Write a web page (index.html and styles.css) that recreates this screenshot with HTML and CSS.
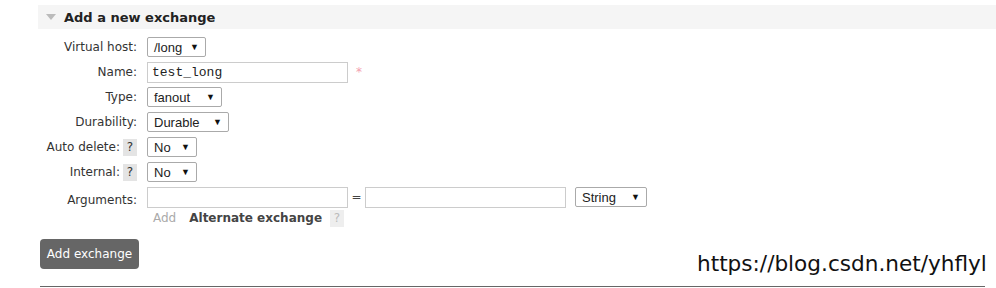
FILE: index.html
```html
<!DOCTYPE html>
<html lang="en">
<head>
  <meta charset="UTF-8" />
  <title>Add a new exchange</title>
  <link rel="stylesheet" href="styles.css">
</head>
<body>

<div class="section">
  <h2 class="section-title"><span class="arrow"></span>Add a new exchange</h2>

  <div class="form">
    <label>Virtual host:</label>
    <div class="field"><div class="select w-vhost">/long<span class="caret">&#9660;</span></div></div>

    <label>Name:</label>
    <div class="field"><div class="input mono">test_long</div><span class="mand">*</span></div>

    <label>Type:</label>
    <div class="field"><div class="select w-type">fanout<span class="caret">&#9660;</span></div></div>

    <label>Durability:</label>
    <div class="field"><div class="select w-dur">Durable<span class="caret">&#9660;</span></div></div>

    <label>Auto delete: <span class="help">?</span></label>
    <div class="field"><div class="select w-no">No<span class="caret">&#9660;</span></div></div>

    <label>Internal: <span class="help">?</span></label>
    <div class="field"><div class="select w-no">No<span class="caret">&#9660;</span></div></div>

    <label class="lbl-args">Arguments:</label>
    <div class="field args">
      <div class="input"></div>
      <span class="eq">=</span>
      <div class="input"></div>
      <div class="select w-str">String<span class="caret">&#9660;</span></div>
    </div>

    <span></span>
    <div class="field extra">
      <span class="add-link">Add</span>
      <span class="alt">Alternate exchange</span>
      <span class="help faint">?</span>
    </div>
  </div>

  <button class="btn">Add exchange</button>
  <div class="rule"></div>
</div>

<div class="watermark">https://blog.csdn.net/yhflyl</div>

</body>
</html>
```

FILE: styles.css
```css
* {
  box-sizing: border-box;
}

body {
  margin: 0;
  font-family: Tahoma, "DejaVu Sans", Verdana, sans-serif;
  font-size: 12px;
  color: #333;
  background: #fff;
}

.section {
  padding: 5px 0 0 38px;
}

.section-title {
  margin: 0;
  height: 24px;
  display: flex;
  align-items: center;
  background: #f5f5f5;
  font-size: 13px;
  font-weight: bold;
  color: #222;
  padding-left: 8px;
}

.arrow {
  width: 0;
  height: 0;
  border-left: 5px solid transparent;
  border-right: 5px solid transparent;
  border-top: 6px solid #bbb;
  margin-right: 8px;
}

.form {
  display: grid;
  grid-template-columns: 99px auto;
  column-gap: 10px;
  row-gap: 5px;
  margin-top: 8px;
}

.form label {
  display: flex;
  align-items: center;
  justify-content: flex-end;
  height: 20px;
  white-space: nowrap;
}

.form .lbl-args {
  padding-top: 6px;
}

.field {
  display: flex;
  align-items: center;
  height: 20px;
}

.select {
  height: 20px;
  border: 1px solid #aaa;
  border-radius: 2px;
  background: #fff;
  color: #222;
  display: flex;
  align-items: center;
  justify-content: space-between;
  padding: 0 6px 0 6px;
  font-family: "Liberation Sans", Arial, sans-serif;
  font-size: 13px;
}

.caret {
  font-size: 9px;
  color: #111;
}

.w-vhost { width: 59px; }
.w-type { width: 75px; }
.w-dur { width: 82px; }
.w-no { width: 50px; }
.w-str { width: 72px; margin-left: 9px; }

.input {
  width: 201px;
  height: 21px;
  border: 1px solid #ccc;
  background: #fff;
  display: flex;
  align-items: center;
  padding-left: 4px;
}

.mono {
  font-family: "Liberation Mono", "Courier New", monospace;
  font-size: 13px;
  color: #222;
}

.mand {
  color: #f3a0b0;
  margin-left: 8px;
  font-size: 12px;
}

.eq {
  width: 17px;
  text-align: center;
  color: #444;
}

.help {
  display: inline-block;
  width: 14px;
  height: 17px;
  line-height: 17px;
  text-align: center;
  background: #e4e4e4;
  color: #333;
  margin-left: 3px;
}

.help.faint {
  background: #eee;
  color: #bbb;
  margin-left: 8px;
}

.extra {
  height: 22px;
  margin-top: -5px;
}

.add-link {
  color: #aaa;
  margin-left: 6px;
}

.alt {
  font-weight: bold;
  font-size: 12px;
  color: #444;
  margin-left: 13px;
}

.btn {
  display: block;
  margin: 10px 0 0 2px;
  width: 99px;
  height: 30px;
  padding: 0;
  border: none;
  border-radius: 4px;
  background: #666;
  color: #fff;
  white-space: nowrap;
  font-family: Tahoma, "DejaVu Sans", Verdana, sans-serif;
  font-size: 12px;
}

.rule {
  margin: 17px 0 0 2px;
  width: 945px;
  height: 1px;
  background: #666;
}

.watermark {
  position: absolute;
  left: 697px;
  top: 251px;
  font-family: "DejaVu Sans", sans-serif;
  font-size: 21.6px;
  color: #111;
}
```
